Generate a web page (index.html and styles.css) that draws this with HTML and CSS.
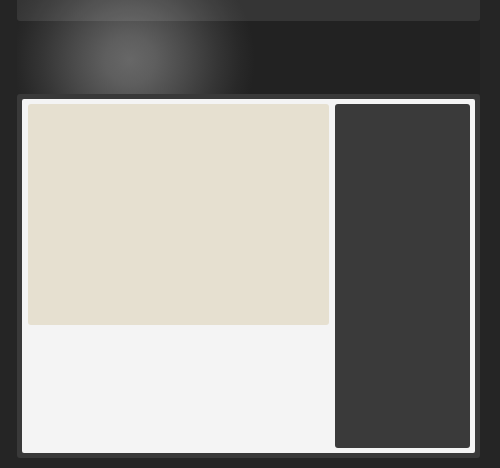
FILE: index.html
```html
<!DOCTYPE html>
<html>
<head>
<meta charset="utf-8">
<link rel="stylesheet" href="styles.css">
</head>
<body>
<div class="stage">
  <div class="head">
    <div class="topbar"></div>
  </div>
  <div class="frame">
    <div class="sheet">
      <div class="main">
        <div class="hero"></div>
        <div class="lower"></div>
      </div>
      <div class="side"></div>
    </div>
  </div>
</div>
</body>
</html>
```

FILE: styles.css
```css
html, body {
  margin: 0;
  padding: 0;
}
body {
  width: 500px;
  height: 468px;
  overflow: hidden;
  background: #252525;
  font-family: "Liberation Sans", sans-serif;
}
.stage {
  margin: 0 20px 0 17px;
}
.head {
  height: 94px;
  background-color: #222;
  background-image: radial-gradient(ellipse 125px 120px at 113px 60px, #676767 0%, #5e5e5e 20%, #4a4a4a 45%, #353535 70%, #282828 88%, #222 100%);
  background-repeat: no-repeat;
}
.topbar {
  height: 21px;
  background: rgba(255, 255, 255, 0.09);
  border-radius: 0 0 3px 3px;
}
.frame {
  height: 364px;
  box-sizing: border-box;
  padding: 5px;
  background: #393939;
  border-radius: 3px;
}
.sheet {
  height: 354px;
  box-sizing: border-box;
  padding: 5px 5px 5px 6px;
  background: #f4f4f4;
  border-radius: 2px;
  display: flex;
  gap: 6px;
}
.main {
  width: 301px;
  display: flex;
  flex-direction: column;
}
.hero {
  height: 221px;
  background: #e6e0d0;
  border-radius: 3px;
}
.lower {
  flex: 1;
}
.side {
  flex: 1;
  background: #3a3a3a;
  border-radius: 3px;
}
```
